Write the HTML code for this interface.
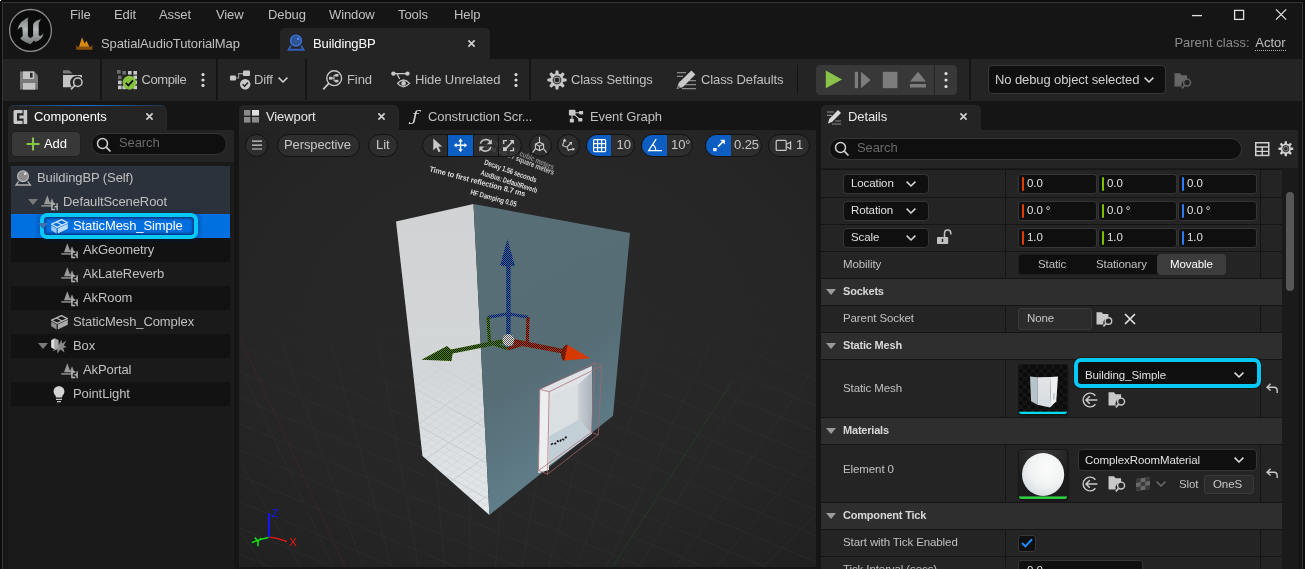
<!DOCTYPE html>
<html><head><meta charset="utf-8"><title>BuildingBP</title>
<style>
*{box-sizing:border-box;margin:0;padding:0}
html,body{width:1305px;height:569px;overflow:hidden;background:#151515}
body{font-family:"Liberation Sans",sans-serif;font-size:13px;color:#c0c0c0;position:relative;letter-spacing:-0.1px}
.a{position:absolute}
.t{position:absolute;white-space:nowrap;line-height:16px;height:16px}
svg{position:absolute;overflow:visible}
#frame{position:absolute;left:0;top:0;width:1305px;height:571px;border:2px solid #0c0c0c;border-right-width:2px;pointer-events:none}#frame:after{content:"";position:absolute;left:0;top:0;width:1299px;height:569px;border:1px solid #363636}
.menu .t{top:7px;color:#c0c0c0}
.tb{position:absolute;top:59px;height:41.7px;background:#242424}
.tbt{top:72px}
.sep{position:absolute;top:59px;width:2px;height:41px;background:#151515}
.ptab{position:absolute;top:105px;height:26px;background:#242424;border-radius:5px 5px 0 0}
.ptxt{top:109px;color:#c0c0c0}
.x{position:absolute;font-size:14px;color:#c0c0c0;font-weight:bold}
</style></head><body><div id="root" style="position:absolute;left:0;top:0;width:1305px;height:569px;will-change:transform">
<!-- TITLE -->
<div class="a" id="title" style="left:0;top:0;width:1305px;height:59px;background:#151515"></div>
<div class="menu">
<span class="t" style="left:70px">File</span><span class="t" style="left:114px">Edit</span><span class="t" style="left:159px">Asset</span><span class="t" style="left:216px">View</span><span class="t" style="left:268px">Debug</span><span class="t" style="left:329px">Window</span><span class="t" style="left:398px">Tools</span><span class="t" style="left:454px">Help</span>
</div>
<div class="a" style="left:280px;top:28px;width:210px;height:31px;background:#242424;border-radius:5px 5px 0 0"></div>
<!-- logo -->
<svg style="left:8px;top:8px" width="45" height="45" viewBox="8 8 45 45"><defs><linearGradient id="ug" x1="0" y1="0" x2="0" y2="1"><stop offset="0" stop-color="#7d8282"/><stop offset=".45" stop-color="#b4b8b8"/><stop offset="1" stop-color="#6f7474"/></linearGradient></defs>
<circle cx="30.5" cy="30.4" r="20.9" fill="#0b0b0b" stroke="#8c8c8c" stroke-width="1.3"/>
<path d="M28.6 17.4 C24.5 19 21.6 21.4 20 23.7 C18.8 25.6 18 27.6 17.4 29.8 C18.8 28 20.6 26.8 22.2 27 C22.6 29.8 22.8 33.2 22.7 35.8 C22.2 37 21.2 37.8 20.2 38.3 C21.8 40 23.4 41.2 25.2 42 C27 42.9 28.8 43.6 30.5 44.3 L34.1 40.6 L35.5 41.9 C37.6 41.2 39.4 40.2 40.7 39 C42.2 37.5 43.1 35.6 43.6 33.6 C42.6 34.8 41.4 35.7 40.1 36 C39.4 36 38.9 35.6 38.7 35 L38.7 23.8 C39.1 22 40.2 20.4 41.6 19 C39.2 19.4 36.9 20.4 35.1 21.8 C33.9 22.8 33.2 23.9 33.1 25 L33.1 36 C32.4 37 31.5 37.7 30.5 38 C29.4 37.6 28.5 37 27.9 36 L27.9 22.3 C27.6 20.4 27.8 18.8 28.6 17.4 Z" fill="url(#ug)"/></svg>
<!-- map tab icon -->
<svg style="left:76px;top:37px" width="17" height="13" viewBox="0 0 17 13"><path d="M0.2 7.2 V12.8 H16.4 V7.2 L15.2 9.8 H1.4 Z" fill="#8a5208"/><path d="M3 9.8 L6 0.2 L8.6 6.4 L10.5 3.8 L13.4 9.8 Z" fill="#d88a10"/></svg>
<!-- bp tab icon -->
<svg style="left:287px;top:34px" width="18" height="18" viewBox="287 34 18 18"><circle cx="296" cy="40.6" r="5.5" fill="#2f5496" stroke="#3b78e0" stroke-width="1.2"/><rect x="297.1" y="37.9" width="2" height="2" fill="#4d94ff"/><path d="M291 45.6 L288.6 49.8 H303.6 L301.2 45.6" fill="none" stroke="#2f5fb8" stroke-width="1.9"/></svg>
<svg style="left:468.2px;top:40.3px" width="7" height="7" viewBox="0 0 7 7"><path d="M0.4 0.4 L6.6 6.6 M6.6 0.4 L0.4 6.6" stroke="#d0d0d0" stroke-width="1.7" fill="none"/></svg>
<!-- window controls -->
<svg style="left:1190px;top:8px" width="100" height="14" viewBox="1190 8 100 14" fill="none" stroke="#e0e0e0" stroke-width="1.3"><path d="M1192 15.6 H1202"/><rect x="1234.6" y="10.4" width="9" height="9"/><path d="M1276 9.4 L1286.2 19.6 M1286.2 9.4 L1276 19.6"/></svg>

<!--TABS-->
<span class="t" style="left:101px;top:36px">SpatialAudioTutorialMap</span>
<span class="t" style="left:313px;top:36px;color:#fff">BuildingBP</span>
<span class="t" style="left:1174.4px;top:35px;color:#8a8a8a;letter-spacing:0">Parent class:</span>
<span class="t" style="left:1255.3px;top:35px;color:#c0c0c0;height:16px;letter-spacing:0">Actor</span><div class="a" style="left:1255px;top:50px;width:31px;height:0;border-top:1px dotted #b0b0b0"></div>
<!--WINCTL-->
<!-- TOOLBAR -->
<div class="tb" style="left:0;width:1305px"></div>
<div class="sep" style="left:100px"></div><div class="sep" style="left:216px"></div><div class="sep" style="left:305px"></div><div class="sep" style="left:529px"></div><div class="sep" style="left:796.5px;top:65px;height:29px;width:1.5px;background:#131313"></div><div class="sep" style="left:969px"></div>
<span class="t tbt" style="left:141.5px;letter-spacing:-0.4px">Compile</span>
<span class="t tbt" style="left:254px">Diff</span>
<span class="t tbt" style="left:347px">Find</span>
<span class="t tbt" style="left:415px">Hide Unrelated</span>
<span class="t tbt" style="left:571px">Class Settings</span>
<span class="t tbt" style="left:701px">Class Defaults</span>
<div class="a" style="left:816px;top:64.8px;width:141px;height:30.3px;background:#383838;border-radius:4.5px"></div>
<div class="a" style="left:987.5px;top:65px;width:178.5px;height:29px;background:#0f0f0f;border:1px solid #383838;border-radius:4px"></div>
<span class="t tbt" style="left:995px;color:#d0d0d0">No debug object selected</span>
<!-- save -->
<svg style="left:20px;top:70.5px" width="18" height="19" viewBox="0 0 18 19"><path d="M0 0.4 H14.4 L18 4.4 V18.6 H0 Z" fill="#7a7a7a"/><rect x="3" y="0.4" width="11.2" height="7.6" fill="#c4c4c4"/><rect x="10" y="1.8" width="2.6" height="4.8" fill="#2a2a2a"/><rect x="3" y="12" width="12.2" height="6.6" fill="#c4c4c4"/></svg>
<!-- browse -->
<svg style="left:63px;top:70px" width="20" height="20" viewBox="0 0 20 20"><path d="M0 0.2 H6 L9.6 3.6 H0 Z" fill="#7a7a7a"/><path d="M0 5 H19 V8 A6 6 0 0 0 9 17.2 H0 Z" fill="#c4c4c4"/><circle cx="14.8" cy="12.2" r="4.2" fill="none" stroke="#c4c4c4" stroke-width="1.5"/><path d="M11.8 15.4 L8 19.4" stroke="#c4c4c4" stroke-width="1.6"/></svg>
<!-- compile -->
<svg style="left:117px;top:70px" width="21" height="20" viewBox="0 0 21 20"><g fill="#6e6e6e"><rect x="0" y="0" width="3.6" height="3.6"/><rect x="5.4" y="1" width="3.6" height="3.6"/><rect x="1" y="5.6" width="3.6" height="3.6"/></g><g fill="#c8c8c8"><rect x="11" y="1" width="3.6" height="3.6"/><rect x="16.4" y="1" width="3.6" height="3.6"/><rect x="16.4" y="5.6" width="3.6" height="3.6"/><rect x="1" y="10.6" width="3.6" height="3.6"/><rect x="1" y="15.6" width="3.6" height="3.6"/><rect x="5.4" y="15.6" width="3.6" height="3.6"/><rect x="11" y="15.6" width="3.6" height="3.6"/><rect x="16.4" y="15.6" width="3.6" height="3.6"/><rect x="16.4" y="10.6" width="3.6" height="3.6"/></g><circle cx="12.4" cy="12.6" r="6.8" fill="#86c440"/><path d="M8.8 12.8 L11.4 15.4 L16 10.4" fill="none" stroke="#111" stroke-width="1.9"/></svg>
<svg style="left:201px;top:72px" width="4" height="16" viewBox="0 0 4 16" fill="#d8d8d8"><circle cx="2" cy="2.6" r="1.6"/><circle cx="2" cy="8" r="1.6"/><circle cx="2" cy="13.4" r="1.6"/></svg>
<!-- diff -->
<svg style="left:230px;top:70px" width="21" height="20" viewBox="0 0 21 20"><path d="M5 8 H8.6 V3.6 H13" fill="none" stroke="#9a9a9a" stroke-width="1.1"/><rect x="0" y="5.6" width="6" height="4.8" rx="1" fill="#c8c8c8"/><rect x="13" y="0.6" width="7" height="5.4" rx="1" fill="#c8c8c8"/><circle cx="15.2" cy="14.2" r="5.2" fill="#c8c8c8"/><path d="M12.6 14.2 L14.6 16.2 L18 12.4" fill="none" stroke="#222" stroke-width="1.5"/></svg>
<svg style="left:278px;top:76.5px;color:#d0d0d0" width="10" height="6"><use href="#chev"/></svg>
<!-- find -->
<svg style="left:322px;top:69px" width="22" height="22" viewBox="0 0 22 22"><circle cx="12.2" cy="9.2" r="7.4" fill="none" stroke="#c8c8c8" stroke-width="1.4"/><path d="M6.8 14.4 L1.2 20.4" stroke="#c8c8c8" stroke-width="1.7"/><path d="M8.6 9.2 H12 V6.4 H14 M12 9.2 V12 H14" fill="none" stroke="#c8c8c8" stroke-width="1"/><rect x="7" y="7.8" width="3.4" height="2.8" fill="#c8c8c8"/><rect x="13.2" y="5" width="3.2" height="2.6" fill="#c8c8c8"/><rect x="13.2" y="10.8" width="3.2" height="2.6" fill="#c8c8c8"/></svg>
<!-- hide unrelated -->
<svg style="left:391px;top:71px" width="20" height="18" viewBox="0 0 20 18"><path d="M2.4 2.6 H16 M6 2.6 L8.6 8" stroke="#c8c8c8" stroke-width="1.2" fill="none"/><circle cx="2.4" cy="2.6" r="2.2" fill="#c8c8c8"/><circle cx="16.4" cy="2.6" r="2.2" fill="#c8c8c8"/><path d="M6.6 12.4 Q12.4 5.6 18.6 12.4 Q12.4 19.2 6.6 12.4 Z" fill="none" stroke="#c8c8c8" stroke-width="1.3"/><circle cx="12.6" cy="12.4" r="2.3" fill="#c8c8c8"/></svg>
<svg style="left:514px;top:72px" width="4" height="16" viewBox="0 0 4 16" fill="#d8d8d8"><circle cx="2" cy="2.6" r="1.6"/><circle cx="2" cy="8" r="1.6"/><circle cx="2" cy="13.4" r="1.6"/></svg>
<!-- gear -->
<svg style="left:547px;top:69.7px" width="20" height="20" viewBox="-10 -10 20 20"><g fill="#c8c8c8"><path d="M-1.9 -5.5 L-1.3 -9.6 H1.3 L1.9 -5.5 Z" transform="rotate(0)"/><path d="M-1.9 -5.5 L-1.3 -9.6 H1.3 L1.9 -5.5 Z" transform="rotate(45)"/><path d="M-1.9 -5.5 L-1.3 -9.6 H1.3 L1.9 -5.5 Z" transform="rotate(90)"/><path d="M-1.9 -5.5 L-1.3 -9.6 H1.3 L1.9 -5.5 Z" transform="rotate(135)"/><path d="M-1.9 -5.5 L-1.3 -9.6 H1.3 L1.9 -5.5 Z" transform="rotate(180)"/><path d="M-1.9 -5.5 L-1.3 -9.6 H1.3 L1.9 -5.5 Z" transform="rotate(225)"/><path d="M-1.9 -5.5 L-1.3 -9.6 H1.3 L1.9 -5.5 Z" transform="rotate(270)"/><path d="M-1.9 -5.5 L-1.3 -9.6 H1.3 L1.9 -5.5 Z" transform="rotate(315)"/></g><circle r="6.5" fill="#c8c8c8"/><circle r="4.4" fill="#242424"/><circle r="2.9" fill="none" stroke="#9a9a9a" stroke-width="1.1"/></svg>
<!-- class defaults -->
<svg style="left:676px;top:69.5px" width="21" height="20" viewBox="0 0 21 20"><path d="M1 2.6 H10 M1 6.4 H7 M9 14.6 H20 M6 18.6 H20 M12 10.6 H20" stroke="#8a8a8a" stroke-width="1.1"/><path d="M15.4 0.6 L19.4 4.6 L7 17 L0.6 19 L2.8 12.8 Z" fill="#c8c8c8"/><path d="M0.6 19 L2 15 L4.6 17.6 Z" fill="#6a6a6a"/></svg>
<!-- play group -->
<div class="a" style="left:934px;top:65px;width:1px;height:30px;background:#242424"></div>
<svg style="left:816px;top:65px" width="141" height="30" viewBox="816 65 141 30"><path d="M825.8 70.6 L842 79.4 L825.8 88.2 Z" fill="#8bc34a"/><g fill="#7c7c7c"><rect x="854.8" y="71.8" width="3.2" height="16.4"/><path d="M861 71.8 L870.6 80 L861 88.2 Z"/><rect x="882.8" y="71.8" width="14.6" height="16.4"/><path d="M910 81.4 L918 71.8 L926 81.4 Z"/><rect x="910" y="84" width="16" height="3.5"/></g><g fill="#e0e0e0"><circle cx="946" cy="73.6" r="1.6"/><circle cx="946" cy="80" r="1.6"/><circle cx="946" cy="86.5" r="1.6"/></g></svg>
<svg style="left:1144px;top:76.5px;color:#d8d8d8" width="10" height="6"><use href="#chev"/></svg>
<svg style="left:1173.5px;top:71.5px;color:#666" width="19" height="17"><use href="#browse"/></svg>

<!-- GAP -->
<div class="a" style="left:0;top:100.7px;width:1305px;height:469px;background:#151515"></div>
<!-- COMPONENTS PANEL -->
<div id="comp">
<div class="ptab" style="left:8px;width:159px"></div>
<div class="a" style="left:8px;top:130px;width:226px;height:439px;background:#242424"></div>
<span class="t ptxt" style="left:34px;color:#fff">Components</span>
<svg width="0" height="0" style="position:absolute"><defs>
<symbol id="scn" viewBox="0 0 17 16" overflow="visible">
<path d="M6.3 0.3 L9.6 9.3 L3 9.3 Z" fill="#9a9a9a"/>
<path d="M11 3.2 L13.4 9.3 L8.6 9.3 Z" fill="#9a9a9a"/>
<path d="M0.3 10.2 H12.2 V11.6 H0.3Z" fill="#9a9a9a"/>
<path d="M14.2 9 H10.9 V14.5 H14.2 M16.1 8.2 V15.3 M13.4 11.75 H16.1" fill="none" stroke="#b8b8b8" stroke-width="1.4"/>
</symbol>
<symbol id="mesh" viewBox="0 0 17 15" overflow="visible">
<path d="M0.6 5.2 L10.6 0.7 L16.4 3.6 L6.2 8.4 Z" fill="none" stroke="currentColor" stroke-width="1.3" stroke-linejoin="round"/>
<path d="M5.4 3 L11.2 6" fill="none" stroke="currentColor" stroke-width="1.2"/>
<path d="M0.2 6.4 L5.6 9.4 V14.6 L0.2 11.2 Z" fill="currentColor" opacity=".75"/>
<path d="M6.8 9.4 L16.8 4.8 V9.8 L6.8 14.6 Z" fill="currentColor" opacity=".9"/>
</symbol>
<symbol id="tri" viewBox="0 0 10 6"><path d="M0 0 H10 L5 6 Z" fill="currentColor"/></symbol>
</defs></svg>
<!-- blue top line of focused tab -->
<div class="a" style="left:11px;top:104.5px;width:153px;height:1.5px;background:linear-gradient(90deg,rgba(20,100,200,.2),#1a6fd0 50%,rgba(20,100,200,.2))"></div>
<!-- C icon -->
<svg style="left:13px;top:109px" width="16" height="16" viewBox="0 0 16 16"><path d="M0.5 2.5 Q0.5 1 2 1 H9.5 V4.2 H4 V11.8 H9.5 V15 H2 Q0.5 15 0.5 13.5 Z" fill="#c8c8c8"/><path d="M10.6 1 H14.2 V15 H10.6 V9.6 H6.4 V6.4 H10.6 Z" fill="#c8c8c8"/></svg>
<svg style="left:145.7px;top:113.1px" width="7" height="7" viewBox="0 0 7 7"><path d="M0.4 0.4 L6.6 6.6 M6.6 0.4 L0.4 6.6" stroke="#d0d0d0" stroke-width="1.7" fill="none"/></svg>
<!-- Add button -->
<div class="a" style="left:11.5px;top:131.5px;width:68.5px;height:24.5px;background:#383838;border-radius:4px;box-shadow:0 0 0 .5px #1c1c1c"></div>
<svg style="left:26px;top:137px" width="14" height="14" viewBox="0 0 14 14"><path d="M7 0.5 V13.5 M0.5 7 H13.5" stroke="#8bc24a" stroke-width="2" fill="none"/></svg>
<span class="t" style="left:44px;top:135.5px;color:#fff">Add</span>
<!-- Search -->
<div class="a" style="left:91px;top:133px;width:136px;height:22px;background:#0f0f0f;border:1px solid #353535;border-radius:11px"></div>
<svg style="left:96px;top:137px" width="16" height="16" viewBox="0 0 16 16"><circle cx="6.5" cy="6.5" r="5" fill="none" stroke="#d0d0d0" stroke-width="1.5"/><path d="M10.2 10.2 L14.5 14.5" stroke="#d0d0d0" stroke-width="1.7"/></svg>
<span class="t" style="left:119px;top:135px;color:#6a6a6a">Search</span>
<!-- tree -->
<div class="a" style="left:8px;top:162px;width:226px;height:407px;background:#1a1a1a"></div>
<div class="a" style="left:11px;top:166px;width:219px;height:48px;background:#2b323b"></div>
<div class="a" style="left:11px;top:214px;width:219px;height:24px;background:#0070e0"></div>
<div class="a" style="left:11px;top:238px;width:219px;height:24px;background:#121212"></div>
<div class="a" style="left:11px;top:286px;width:219px;height:24px;background:#121212"></div>
<div class="a" style="left:11px;top:334px;width:219px;height:24px;background:#121212"></div>
<div class="a" style="left:11px;top:382px;width:219px;height:24px;background:#121212"></div>
<!-- highlight box -->
<div class="a" style="left:39.8px;top:212.6px;width:158.2px;height:26.4px;border:4px solid #08c8f5;border-radius:7px;box-shadow:inset 0 0 2.5px 1.5px rgba(4,40,110,.85),0 0 5px 1px rgba(0,30,90,.45)"></div>
<!-- row1 -->
<svg style="left:15px;top:170px" width="17" height="16" viewBox="0 0 17 16"><circle cx="8" cy="6.2" r="5.4" fill="#8a8a8a"/><circle cx="8" cy="6.2" r="5.4" fill="none" stroke="#b8b8b8" stroke-width="1.2"/><circle cx="10.2" cy="3.8" r="1.3" fill="#e0e0e0"/><path d="M3.6 11.4 L1 15 H15.4 L12.6 11.4" fill="none" stroke="#b0b0b0" stroke-width="1.3"/></svg>
<span class="t" style="left:37px;top:170px">BuildingBP (Self)</span>
<!-- row2 -->
<svg style="left:28px;top:199px;color:#7a7a7a" width="10" height="6"><use href="#tri"/></svg>
<svg style="left:41px;top:195px" width="17" height="16"><use href="#scn"/></svg>
<span class="t" style="left:63px;top:194px">DefaultSceneRoot</span>
<!-- row3 -->
<svg style="left:38px;top:223px;color:#3a6fb0" width="10" height="6"><use href="#tri"/></svg>
<svg style="left:51px;top:219px;color:#cfe4ff" width="17" height="15"><use href="#mesh"/></svg>
<span class="t" style="left:73px;top:218px;color:#fff">StaticMesh_Simple</span>
<!-- rows -->
<svg style="left:61px;top:243px" width="17" height="16"><use href="#scn"/></svg>
<span class="t" style="left:83px;top:242px">AkGeometry</span>
<svg style="left:61px;top:267px" width="17" height="16"><use href="#scn"/></svg>
<span class="t" style="left:83px;top:266px">AkLateReverb</span>
<svg style="left:61px;top:291px" width="17" height="16"><use href="#scn"/></svg>
<span class="t" style="left:83px;top:290px">AkRoom</span>
<svg style="left:51px;top:315px;color:#b8b8b8" width="17" height="15"><use href="#mesh"/></svg>
<span class="t" style="left:73px;top:314px">StaticMesh_Complex</span>
<svg style="left:38px;top:343px;color:#7a7a7a" width="10" height="6"><use href="#tri"/></svg>
<svg style="left:51px;top:338px" width="16" height="16" viewBox="0 0 16 16"><path d="M8 6.4 L10.4 1.6 L11 5.6 L15.4 2.6 L12.8 7.2 L15.8 9.2 L12.2 9.8 L13.6 14.6 L9.4 11.4 L6.4 15.4 L6.2 11.4 L1.4 13.2 L5 9.4 Z" fill="#8a8a8a"/><path d="M0.2 2.2 L3.8 0.2 V11.6 L0.2 9.6 Z" fill="#e0e0e0"/><path d="M3.8 0.2 L7.6 2.2 V9.6 L3.8 11.6 Z" fill="#a8a8a8"/></svg>
<span class="t" style="left:73px;top:338px">Box</span>
<svg style="left:61px;top:363px" width="17" height="16"><use href="#scn"/></svg>
<span class="t" style="left:83px;top:362px">AkPortal</span>
<svg style="left:53px;top:386px" width="12" height="17" viewBox="0 0 12 17"><path d="M6 0.3 C2.6 0.3 0.6 2.8 0.6 5.4 C0.6 7.6 2 8.8 2.8 10 V11.6 H9.2 V10 C10 8.8 11.4 7.6 11.4 5.4 C11.4 2.8 9.4 0.3 6 0.3 Z" fill="#d4d4d4"/><path d="M3 13.4 H9 M4 15.6 H8" stroke="#c4c4c4" stroke-width="1.4"/></svg>
<span class="t" style="left:73px;top:386px">PointLight</span>
<!--COMPEND-->
</div>
<!-- VIEWPORT PANEL -->
<div id="vp">
<!-- tab well -->

<div class="ptab" style="left:239px;width:160px;height:25px"></div>
<svg style="left:244px;top:110px" width="15" height="13" viewBox="0 0 15 13"><rect x="0" y="0" width="6.4" height="5.6" fill="#8a8a8a"/><rect x="8" y="0" width="7" height="5.6" fill="#e0e0e0"/><rect x="0" y="7" width="6.4" height="5.6" fill="#8a8a8a"/><rect x="8" y="7" width="7" height="5.6" fill="#8a8a8a"/></svg>
<span class="t ptxt" style="left:266px;color:#e8e8e8">Viewport</span>
<svg style="left:377.7px;top:113.1px" width="7" height="7" viewBox="0 0 7 7"><path d="M0.4 0.4 L6.6 6.6 M6.6 0.4 L0.4 6.6" stroke="#d0d0d0" stroke-width="1.7" fill="none"/></svg>
<span class="t" id="fn" style="left:411.5px;top:106.5px;font-family:'DejaVu Serif',serif;font-style:italic;font-size:14.5px;line-height:18px;height:18px;color:#d8d8d8;letter-spacing:0;transform:scaleX(1.22);transform-origin:0 0">ƒ</span>
<span class="t ptxt" style="left:428px">Construction Scr...</span>
<svg style="left:568px;top:109px" width="16" height="14" viewBox="568 109 16 14"><path d="M572 112.7 H581 M572.2 112.7 L580 119.6 M572 113 V120" stroke="#c8c8c8" stroke-width="1.1" fill="none"/><rect x="568.9" y="109.8" width="6.6" height="5.6" rx="1" fill="#c8c8c8"/><rect x="579" y="111" width="4.2" height="3.4" rx=".8" fill="#c8c8c8"/><rect x="569.8" y="118.8" width="4.2" height="3.8" rx=".8" fill="#c8c8c8"/><rect x="578.2" y="117.9" width="4.2" height="3.7" rx=".8" fill="#c8c8c8"/></svg>
<span class="t ptxt" style="left:590px">Event Graph</span>
<!-- viewport scene -->
<div class="a" style="left:239px;top:130px;width:577px;height:437px;background:#242424"></div>
<svg id="scene" style="left:240px;top:130px;overflow:hidden" width="576" height="437" viewBox="240 130 576 437">
<defs>
<radialGradient id="vg" cx="50%" cy="45%" r="80%"><stop offset="0" stop-color="#292929"/><stop offset=".6" stop-color="#262626"/><stop offset="1" stop-color="#1f1f1f"/></radialGradient>
<linearGradient id="lf" x1="0" y1="0" x2="0" y2="1"><stop offset="0" stop-color="#d0d2d3"/><stop offset=".55" stop-color="#d4d7d9"/><stop offset="1" stop-color="#e4e8eb"/></linearGradient>
<linearGradient id="rf" x1="0" y1="0" x2="0.3" y2="1"><stop offset="0" stop-color="#586f78"/><stop offset=".6" stop-color="#566d76"/><stop offset="1" stop-color="#61808c"/></linearGradient>
<linearGradient id="door" x1="0" y1="0" x2="1" y2="0"><stop offset="0" stop-color="#ccd2d6"/><stop offset="1" stop-color="#a9b4ba"/></linearGradient>
<linearGradient id="gmg" x1="0" y1="0" x2="0" y2="1"><stop offset="0" stop-color="#000"/><stop offset=".3" stop-color="#000"/><stop offset=".62" stop-color="#fff"/><stop offset="1" stop-color="#fff"/></linearGradient><mask id="gm" maskUnits="userSpaceOnUse" x="240" y="130" width="576" height="437"><rect x="240" y="130" width="576" height="437" fill="url(#gmg)"/></mask><clipPath id="lfc"><path d="M396 221.5 L473.5 204 L489.4 515 L422.5 456 Z"/></clipPath><linearGradient id="lfmg" x1="0" y1="0" x2="0" y2="1"><stop offset="0" stop-color="#000"/><stop offset=".42" stop-color="#000"/><stop offset=".7" stop-color="#fff"/><stop offset="1" stop-color="#fff"/></linearGradient><mask id="lfm" maskUnits="userSpaceOnUse" x="390" y="200" width="110" height="320"><rect x="390" y="200" width="110" height="320" fill="url(#lfmg)"/></mask><pattern id="chB" width="2" height="2" patternUnits="userSpaceOnUse" shape-rendering="crispEdges"><rect width="2" height="2" fill="#2a6ad0"/><rect width="1" height="1" fill="#0a1020"/><rect x="1" y="1" width="1" height="1" fill="#0a1020"/></pattern>
<pattern id="chG" width="2" height="2" patternUnits="userSpaceOnUse" shape-rendering="crispEdges"><rect width="2" height="2" fill="#4a8a00"/><rect width="1" height="1" fill="#0c1400"/><rect x="1" y="1" width="1" height="1" fill="#0c1400"/></pattern>
<pattern id="chR" width="2" height="2" patternUnits="userSpaceOnUse" shape-rendering="crispEdges"><rect width="2" height="2" fill="#d03000"/><rect width="1" height="1" fill="#180400"/><rect x="1" y="1" width="1" height="1" fill="#180400"/></pattern>
<pattern id="chW" width="2" height="2" patternUnits="userSpaceOnUse" shape-rendering="crispEdges"><rect width="2" height="2" fill="#e8e8e8"/><rect width="1" height="1" fill="#505050"/><rect x="1" y="1" width="1" height="1" fill="#505050"/></pattern>
</defs>
<rect x="240" y="130" width="576" height="437" fill="url(#vg)"/>
<!-- ground grid -->
<g stroke="#363636" stroke-width="1" opacity=".4" fill="none" mask="url(#gm)"><path d="M240 -70 L816 172 M240 -44 L816 198 M240 -18 L816 224 M240 8 L816 250 M240 34 L816 276 M240 60 L816 302 M240 86 L816 328 M240 112 L816 354 M240 138 L816 380 M240 164 L816 406 M240 190 L816 432 M240 216 L816 458 M240 242 L816 484 M240 268 L816 510 M240 294 L816 536 M240 320 L816 562 M240 346 L816 588 M240 372 L816 614 M240 398 L816 640 M240 424 L816 666 M240 450 L816 692 M240 476 L816 718 M240 502 L816 744 M240 528 L816 770 M240 554 L816 796 M240 580 L816 822 M240 606 L816 848 M240 632 L816 874 M240 658 L816 900 M240 684 L816 926 M240 710 L816 952 M240 736 L816 978 M240 762 L816 1004 M240 788 L816 1030 M240 814 L816 1056"/><path d="M470 860 L-309 410 M470 860 L-267 344 M470 860 L-219 281 M470 860 L-166 224 M470 860 L-109 171 M470 860 L-46 123 M470 860 L20 81 M470 860 L90 44 M470 860 L162 14 M470 860 L237 -9 M470 860 L314 -26 M470 860 L392 -37 M470 860 L470 -40 M470 860 L548 -37 M470 860 L626 -26 M470 860 L703 -9 M470 860 L778 14 M470 860 L850 44 M470 860 L920 81 M470 860 L986 123 M470 860 L1049 171 M470 860 L1106 224 M470 860 L1159 281 M470 860 L1207 344 M470 860 L1249 410"/></g>
<path d="M240 338 L346 569" stroke="#4a2626" stroke-width="1" opacity=".6"/>
<path d="M733 380 L613 566" stroke="#264026" stroke-width="1" opacity=".7"/>
<!-- 3D text -->
<g font-family="Liberation Sans, sans-serif" font-size="7.6" fill="#dcdcdc" font-weight="bold" style="filter:blur(.3px)">
<text transform="translate(480,139) rotate(23)" textLength="79" lengthAdjust="spacingAndGlyphs" fill="#8c8c8c">Volume 286.41 cubic meters</text>
<text transform="translate(483,148) rotate(21)" textLength="75" lengthAdjust="spacingAndGlyphs" fill="#c4c4c4">Area 345.77 square meters</text>
<text transform="translate(483.8,164.3) rotate(19.5)" textLength="55" lengthAdjust="spacingAndGlyphs">Decay 1.56 seconds</text>
<text transform="translate(480.3,174.8) rotate(18)" textLength="59" lengthAdjust="spacingAndGlyphs">AuxBus: DefaultReverb</text>
<text transform="translate(429,171.2) rotate(14.8)" textLength="99" lengthAdjust="spacingAndGlyphs">Time to first reflection 8.7 ms</text>
<text transform="translate(470,194.3) rotate(15.3)" textLength="47.5" lengthAdjust="spacingAndGlyphs">HF Damping 0.05</text>
</g>
<!-- building -->
<path d="M396 221.5 L473.5 204 L489.4 515 L422.5 456 Z" fill="url(#lf)"/>
<path d="M473.5 204 L630 233 L613 415.7 L489.4 515 Z" fill="url(#rf)"/>
<!-- left face faint grid -->
<g clip-path="url(#lfc)" mask="url(#lfm)" stroke="#c3c9cd" stroke-width=".6" fill="none" opacity=".6"><path d="M390 200 L495 257.8 M390 207 L495 264.8 M390 214 L495 271.8 M390 221 L495 278.8 M390 228 L495 285.8 M390 235 L495 292.8 M390 242 L495 299.8 M390 249 L495 306.8 M390 256 L495 313.8 M390 263 L495 320.8 M390 270 L495 327.8 M390 277 L495 334.8 M390 284 L495 341.8 M390 291 L495 348.8 M390 298 L495 355.8 M390 305 L495 362.8 M390 312 L495 369.8 M390 319 L495 376.8 M390 326 L495 383.8 M390 333 L495 390.8 M390 340 L495 397.8 M390 347 L495 404.8 M390 354 L495 411.8 M390 361 L495 418.8 M390 368 L495 425.8 M390 375 L495 432.8 M390 382 L495 439.8 M390 389 L495 446.8 M390 396 L495 453.8 M390 403 L495 460.8 M390 410 L495 467.8 M390 417 L495 474.8 M390 424 L495 481.8 M390 431 L495 488.8 M390 438 L495 495.8 M390 445 L495 502.8 M390 452 L495 509.8 M390 459 L495 516.8 M390 466 L495 523.8 M390 473 L495 530.8 M390 480 L495 537.8 M390 487 L495 544.8 M390 494 L495 551.8 M390 501 L495 558.8 M390 508 L495 565.8 M390 515 L495 572.8 M390 522 L495 579.8 M390 529 L495 586.8 M390 536 L495 593.8 M390 543 L495 600.8 M390 550 L495 607.8 M390 557 L495 614.8 M390 564 L495 621.8 M390 571 L495 628.8 M390 578 L495 635.8 M390 585 L495 642.8 M390 592 L495 649.8 M390 599 L495 656.8 M390 606 L495 663.8 M390 613 L495 670.8 M390 620 L495 677.8 M390 627 L495 684.8 M390 634 L495 691.8 M390 641 L495 698.8 M390 648 L495 705.8 M390 655 L495 712.8 M390 662 L495 719.8 M390 669 L495 726.8 M390 676 L495 733.8 M390 683 L495 740.8 M390 690 L495 747.8 M390 697 L495 754.8 M390 300 L495 226.5 M390 308 L495 234.5 M390 316 L495 242.5 M390 324 L495 250.5 M390 332 L495 258.5 M390 340 L495 266.5 M390 348 L495 274.5 M390 356 L495 282.5 M390 364 L495 290.5 M390 372 L495 298.5 M390 380 L495 306.5 M390 388 L495 314.5 M390 396 L495 322.5 M390 404 L495 330.5 M390 412 L495 338.5 M390 420 L495 346.5 M390 428 L495 354.5 M390 436 L495 362.5 M390 444 L495 370.5 M390 452 L495 378.5 M390 460 L495 386.5 M390 468 L495 394.5 M390 476 L495 402.5 M390 484 L495 410.5 M390 492 L495 418.5 M390 500 L495 426.5 M390 508 L495 434.5 M390 516 L495 442.5 M390 524 L495 450.5 M390 532 L495 458.5 M390 540 L495 466.5 M390 548 L495 474.5 M390 556 L495 482.5 M390 564 L495 490.5 M390 572 L495 498.5 M390 580 L495 506.5 M390 588 L495 514.5 M390 596 L495 522.5 M390 604 L495 530.5 M390 612 L495 538.5 M390 620 L495 546.5 M390 628 L495 554.5 M390 636 L495 562.5 M390 644 L495 570.5 M390 652 L495 578.5 M390 660 L495 586.5 M390 668 L495 594.5 M390 676 L495 602.5 M390 684 L495 610.5 M390 692 L495 618.5 M390 700 L495 626.5 M390 708 L495 634.5 M390 716 L495 642.5 M390 724 L495 650.5 M390 732 L495 658.5 M390 740 L495 666.5 M390 748 L495 674.5 M390 756 L495 682.5 M390 764 L495 690.5 M390 772 L495 698.5 M390 780 L495 706.5 M390 788 L495 714.5 M390 796 L495 722.5"/><path d="M390 200 L495 257.8 M390 235 L495 292.8 M390 270 L495 327.8 M390 305 L495 362.8 M390 340 L495 397.8 M390 375 L495 432.8 M390 410 L495 467.8 M390 445 L495 502.8 M390 480 L495 537.8 M390 515 L495 572.8 M390 550 L495 607.8 M390 585 L495 642.8 M390 620 L495 677.8 M390 655 L495 712.8 M390 690 L495 747.8 M390 324 L495 250.5 M390 364 L495 290.5 M390 404 L495 330.5 M390 444 L495 370.5 M390 484 L495 410.5 M390 524 L495 450.5 M390 564 L495 490.5 M390 604 L495 530.5 M390 644 L495 570.5 M390 684 L495 610.5 M390 724 L495 650.5 M390 764 L495 690.5" stroke="#b4bbc0" stroke-width=".8"/></g>
<!-- door -->
<path d="M539.8 389.3 L591.9 366 L591.9 433.6 L538.5 473 Z" fill="#dfe3e6"/>
<path d="M549.6 396 L578 384.6 L578 420 L549.6 436 Z" fill="#dadfe2"/>
<path d="M578 384.6 L591.9 372 L591.9 433.6 L578 420 Z" fill="url(#door)"/>
<path d="M549.6 436 L578 420 L591.9 433.6 L538.5 473 L539 442 Z" fill="#c3cfd7"/>
<path d="M539.8 389.3 L549.4 392 L549 470 L538.5 473 Z" fill="#eceeef"/>
<g fill="none" stroke="#a8656e" stroke-width=".85" opacity=".85"><path d="M539.8 389.3 L595 362.8 L591.4 432.4 L538.5 470.5 Z"/><path d="M549.1 391.8 L601.7 366 L598.3 434.8 L547.6 474.2 Z"/><path d="M539.8 389.3 L549.1 391.8 M595 362.8 L601.7 366 M591.4 432.4 L598.3 434.8 M538.5 470.5 L547.6 474.2"/></g>
<path d="M551 444.6 l2.4 -1.6 l1.6 .8 l2.6 -2.8 l2 1 l2.4 -3.4 l1.8 1.2 l2 -2.6 l1.6 .4" stroke="#151515" stroke-width="1.5" fill="none" stroke-dasharray="2.4 1.4"/>
<!-- gizmo -->
<g fill="none" stroke-width="3">
<path d="M488 317.2 L508.3 313.8 L528 317.2" stroke="url(#chB)"/>
<path d="M488 317.2 L489.4 342.2 L507.6 348.8" stroke="url(#chG)"/>
<path d="M528 317.2 L527.2 343 L507.6 348.8" stroke="url(#chR)"/>
</g>
<path d="M506.2 340 V266 H500 L507.4 239 L515 266 H510.6 V340 Z" fill="url(#chB)"/>
<path d="M506 338.6 L451 349.4 L447 345.9 L421.4 359.7 L451.5 361 L452.6 353.4 L507 342.8 Z" fill="url(#chG)"/>
<path d="M510 338.2 L563 349 L562.5 353.6 L509 343.4 Z" fill="url(#chR)"/>
<ellipse cx="565.6" cy="352.6" rx="4.2" ry="8" fill="url(#chR)" transform="rotate(12 565.6 352.6)"/>
<path d="M567.5 345 L590.3 358.2 L564.5 360.6 Z" fill="#d63a02"/>
<circle cx="508.3" cy="340" r="6" fill="url(#chW)"/>
<!-- axis indicator -->
<g fill="none"><path d="M269 537 V513" stroke="#1414ff" stroke-width="2"/><path d="M269.6 537.2 L278 538.6 L287 541.6" stroke="#f01414" stroke-width="1.3"/><path d="M268.4 537.4 L260 539.6 L251.8 542.6 M254.8 537.6 L258 541.2 L261.2 538 M258 541.2 V546.2" stroke="#14e614" stroke-width="1.5"/></g>
<g font-family="Liberation Sans, sans-serif" font-size="11.5"><text x="271.4" y="517.4" fill="#1414ff">Z</text><text x="289.2" y="545.8" fill="#f01414">X</text></g>
</svg>
<!-- viewport toolbar -->
<style>
.pill{position:absolute;top:133.5px;height:23px;background:#2e2e2e;border:1px solid #111;border-radius:11.5px;overflow:hidden}
.pill .b{position:absolute;left:0;top:0;bottom:0;background:#0c5ec2}
.vt{top:137px;color:#c8c8c8}
</style>
<div class="pill" style="left:245px;width:23px"></div>
<svg style="left:251.5px;top:140px" width="10" height="10"><path d="M0 1.2 H10 M0 5.1 H10 M0 9 H10" stroke="#d0d0d0" stroke-width="1.2"/></svg>
<div class="pill" style="left:276.5px;width:83px"></div><span class="t vt" style="left:284px">Perspective</span>
<div class="pill" style="left:368px;width:29.5px"></div><span class="t vt" style="left:376px">Lit</span>
<div class="pill" style="left:422px;width:100px;background:rgba(46,46,46,.85)"><div class="b" style="left:25px;width:24.5px"></div><div class="a" style="left:0;top:0;width:25px;height:23px;border-right:1px solid #151515"></div><div class="a" style="left:49.5px;top:0;width:1px;height:23px;background:#151515"></div><div class="a" style="left:74.5px;top:0;width:1px;height:23px;background:#151515"></div></div>

<div class="pill" style="left:528.5px;width:23px"></div>
<div class="pill" style="left:557px;width:23px"></div>
<div class="pill" style="left:586px;width:49px"><div class="b" style="width:24px"></div></div><span class="t vt" style="left:616.5px">10</span>
<div class="pill" style="left:641px;width:52px"><div class="b" style="width:24.5px"></div></div><span class="t vt" style="left:671px">10°</span>
<div class="pill" style="left:705px;width:57px"><div class="b" style="width:24.5px"></div></div><span class="t vt" style="left:734px">0.25</span>
<div class="pill" style="left:768px;width:41.5px"></div><span class="t vt" style="left:796px">1</span>
<svg style="left:422px;top:133px" width="390" height="24" viewBox="422 133 390 24">
<!-- select -->
<path d="M433.3 138.4 V150.4 L436.3 147.6 L438.6 152.2 L440.6 151.3 L438.4 146.8 L442.2 146.4 Z" fill="#c8c8c8"/>
<!-- move -->
<g stroke="#fff" stroke-width="1.4" fill="#fff"><path d="M460.5 140 V150.6 M455.2 145.3 H465.8" fill="none"/><path d="M460.5 138.6 L462.8 141.4 H458.2 Z M460.5 152 L462.8 149.2 H458.2 Z M453.8 145.3 L456.6 143 V147.6 Z M467.2 145.3 L464.4 143 V147.6 Z" stroke="none"/></g>
<!-- rotate -->
<g fill="none" stroke="#c8c8c8" stroke-width="1.5"><path d="M480.4 143.6 A5.6 5.6 0 0 1 490.6 142.4"/><path d="M490.8 147 A5.6 5.6 0 0 1 480.6 148.4"/></g><path d="M491.8 139.2 V144.2 H486.8 Z M479.4 151.4 V146.4 H484.4 Z" fill="#c8c8c8"/>
<!-- scale -->
<g fill="none" stroke="#c8c8c8" stroke-width="1.4"><path d="M503.6 144 V140.6 H507 M513.4 147.4 V150.6 H510"/><path d="M506 148.4 L512.6 141.6" stroke-width="1.6"/></g><rect x="503" y="147.2" width="3.8" height="3.8" fill="#c8c8c8"/><path d="M514 140 V144.6 L509.4 140 Z" fill="#c8c8c8"/>
<!-- coord cube -->
<g fill="none" stroke="#c8c8c8" stroke-width="1.1"><path d="M539.5 137 V142.2 M539.5 142.2 L543.6 144.2 V148.6 L539.5 150.6 L535.4 148.6 V144.2 Z M535.4 144.2 L539.5 146.2 L543.6 144.2 M539.5 146.2 V150.6 M535.4 148.6 L532.6 152.6 M543.6 148.6 L546.6 152.6"/></g>
<!-- surface snap -->
<g fill="none" stroke="#c8c8c8" stroke-width="1.1"><path d="M562.2 145.4 L567 147.1 L568.6 151"/><path d="M562.6 145.2 L564.4 140.6 M567 147 L570.6 143.4 M568.6 149.9 L573.4 149.2"/></g><path d="M564.9 138.6 L566.6 141.8 L562.6 141 Z M572.2 141.8 L571.6 145.2 L568.8 142.4 Z M575.2 148.9 L572.6 151 L572.2 147.4 Z" fill="#c8c8c8"/>
<!-- grid -->
<g fill="none" stroke="#fff" stroke-width="1.2"><rect x="593.6" y="139.6" width="12" height="12" rx="1"/><path d="M597.6 139.6 V151.6 M601.6 139.6 V151.6 M593.6 143.6 H605.6 M593.6 147.6 H605.6"/></g>
<!-- angle -->
<g fill="none" stroke="#fff" stroke-width="1.2"><path d="M656.2 139.2 L648.6 150.6 H662"/><path d="M652.6 144.6 A6.5 6.5 0 0 1 655.6 150.6"/></g>
<!-- scale snap -->
<rect x="713.2" y="148" width="3.4" height="3.2" fill="#fff"/><path d="M718 146.6 L723.4 141.2" stroke="#fff" stroke-width="1.5" fill="none"/><path d="M724.8 139.8 V144.6 L720 139.8 Z" fill="#fff"/>
<!-- camera -->
<g fill="none" stroke="#c8c8c8" stroke-width="1.2"><rect x="776.2" y="140.4" width="10" height="10" rx="1"/><path d="M786.4 144.6 L790.6 142 V149 L786.4 146.4"/></g>
</svg>
<!--VPEND-->
</div>
<!-- DETAILS PANEL -->
<div id="det">
<svg width="0" height="0" style="position:absolute"><defs>
<symbol id="chev" viewBox="0 0 10 6" overflow="visible"><path d="M0.6 0.6 L5 5 L9.4 0.6" fill="none" stroke="currentColor" stroke-width="1.5"/></symbol>
<symbol id="browse" viewBox="0 0 18 16" overflow="visible"><path d="M0.5 1.2 H5.6 L7.2 3 H12.4 V7 A5 5 0 0 0 7.4 13.6 H0.5 Z" fill="currentColor"/><circle cx="12.4" cy="10" r="3.3" fill="none" stroke="currentColor" stroke-width="1.4"/><path d="M10 12.6 L7.4 15.4" stroke="currentColor" stroke-width="1.6"/></symbol>
<symbol id="usesel" viewBox="0 0 16 16" overflow="visible"><path d="M13.44 3.75 A6.9 6.9 0 1 0 13.44 12.25" fill="none" stroke="currentColor" stroke-width="1.4"/><path d="M15.4 8 H4.2 M7.8 4.2 L4 8 L7.8 11.8" fill="none" stroke="currentColor" stroke-width="1.6"/></symbol>
<symbol id="reset" viewBox="0 0 12 11" overflow="visible"><path d="M4.6 0.8 L1 4.2 L4.6 7.6 M1 4.2 H8 Q11.2 4.2 11.2 7.4 V10" fill="none" stroke="currentColor" stroke-width="1.4"/></symbol>
</defs></svg>
<style>
#det{font-size:11.5px;letter-spacing:-0.1px}
#det .t{line-height:14px;height:14px;margin-top:-0.6px}
.row{position:absolute;left:821px;width:461px;background:#242424;border-top:1px solid #151515}
.hrow{position:absolute;left:821px;width:461px;background:#2e2e2e;border-top:1px solid #151515}
.lbl{color:#c0c0c0;left:843px}
.hl{color:#d8d8d8;left:843px;font-weight:bold;font-size:11px;letter-spacing:-0.2px}
.vb{position:absolute;height:20px;background:#0f0f0f;border:1px solid #353535;border-radius:3px}
.vb i{position:absolute;left:2.5px;top:2px;width:2px;height:14px;border-radius:1px}
.vtx{color:#e0e0e0}
.dd{position:absolute;background:#0f0f0f;border:1px solid #353535;border-radius:4px}
</style>

<div class="ptab" style="left:821px;width:160px;height:25px"></div>
<div class="a" style="left:821px;top:130px;width:477px;height:439px;background:#242424"></div>
<svg style="left:826px;top:109px" width="17" height="16" viewBox="0 0 17 16"><path d="M1 3 H8 M1 6.4 H6 M6 15 H15 M9 12 H15" stroke="#8a8a8a" stroke-width="1.2"/><path d="M12 1 L15 4 L6 13 L2 14.4 L3.2 10 Z" fill="#d8d8d8"/></svg>
<span class="t" style="left:848px;top:109.5px;font-size:13px;line-height:16px;height:16px;color:#e8e8e8;letter-spacing:-0.1px">Details</span>
<svg style="left:959.7px;top:113.1px" width="7" height="7" viewBox="0 0 7 7"><path d="M0.4 0.4 L6.6 6.6 M6.6 0.4 L0.4 6.6" stroke="#d0d0d0" stroke-width="1.7" fill="none"/></svg>
<!-- search -->
<div class="a" style="left:829px;top:138px;width:413px;height:22px;background:#0f0f0f;border:1px solid #353535;border-radius:11px"></div>
<svg style="left:834px;top:141px" width="16" height="16" viewBox="0 0 16 16"><circle cx="6.5" cy="6.5" r="5" fill="none" stroke="#d0d0d0" stroke-width="1.5"/><path d="M10.2 10.2 L14.5 14.5" stroke="#d0d0d0" stroke-width="1.7"/></svg>
<span class="t" style="left:857px;top:140.7px;font-size:13px;line-height:16px;height:16px;color:#6a6a6a">Search</span>
<svg style="left:1254.8px;top:141.9px" width="14.5" height="14.2" viewBox="0 0 14.5 14.2"><rect x=".75" y=".75" width="13" height="12.7" fill="none" stroke="#d0d0d0" stroke-width="1.5"/><path d="M.75 5 H13.75 M.75 9.4 H13.75 M7.25 5 V13.4" stroke="#d0d0d0" stroke-width="1.4"/></svg>
<svg style="left:1278.4px;top:141.1px" width="15.6" height="15.6" viewBox="-10 -10 20 20"><g fill="#d0d0d0"><path d="M-1.9 -5.5 L-1.3 -9.6 H1.3 L1.9 -5.5 Z" transform="rotate(0)"/><path d="M-1.9 -5.5 L-1.3 -9.6 H1.3 L1.9 -5.5 Z" transform="rotate(45)"/><path d="M-1.9 -5.5 L-1.3 -9.6 H1.3 L1.9 -5.5 Z" transform="rotate(90)"/><path d="M-1.9 -5.5 L-1.3 -9.6 H1.3 L1.9 -5.5 Z" transform="rotate(135)"/><path d="M-1.9 -5.5 L-1.3 -9.6 H1.3 L1.9 -5.5 Z" transform="rotate(180)"/><path d="M-1.9 -5.5 L-1.3 -9.6 H1.3 L1.9 -5.5 Z" transform="rotate(225)"/><path d="M-1.9 -5.5 L-1.3 -9.6 H1.3 L1.9 -5.5 Z" transform="rotate(270)"/><path d="M-1.9 -5.5 L-1.3 -9.6 H1.3 L1.9 -5.5 Z" transform="rotate(315)"/></g><circle r="6.5" fill="#d0d0d0"/><circle r="4.4" fill="#242424"/><circle r="2.9" fill="none" stroke="#a0a0a0" stroke-width="1.1"/></svg>
<!-- rows -->
<div class="a" style="left:821px;top:168px;width:477px;height:401px;background:#1a1a1a"></div>
<div class="row" style="top:169px;height:28px"></div>
<div class="row" style="top:197px;height:27px"></div>
<div class="row" style="top:224px;height:27px"></div>
<div class="row" style="top:251px;height:27px"></div>
<div class="hrow" style="top:278px;height:27px"></div>
<div class="row" style="top:305px;height:27px"></div>
<div class="hrow" style="top:332px;height:27px"></div>
<div class="row" style="top:359px;height:58px"></div>
<div class="hrow" style="top:417px;height:27px"></div>
<div class="row" style="top:444px;height:58px"></div>
<div class="hrow" style="top:502px;height:27px"></div>
<div class="row" style="top:529px;height:27px"></div>
<div class="row" style="top:556px;height:13px"></div>
<!-- column dividers -->
<div class="a" style="left:1005px;top:170px;width:1px;height:108px;background:#151515"></div>
<div class="a" style="left:1005px;top:306px;width:1px;height:26px;background:#151515"></div>
<div class="a" style="left:1005px;top:360px;width:1px;height:57px;background:#151515"></div>
<div class="a" style="left:1005px;top:445px;width:1px;height:57px;background:#151515"></div>
<div class="a" style="left:1005px;top:530px;width:1px;height:39px;background:#151515"></div>
<div class="a" style="left:1260px;top:170px;width:1px;height:108px;background:#151515"></div>
<div class="a" style="left:1260px;top:306px;width:1px;height:26px;background:#151515"></div>
<div class="a" style="left:1260px;top:360px;width:1px;height:57px;background:#151515"></div>
<div class="a" style="left:1260px;top:445px;width:1px;height:57px;background:#151515"></div>
<div class="a" style="left:1260px;top:530px;width:1px;height:39px;background:#151515"></div>
<!-- scrollbar -->
<div class="a" style="left:1286px;top:192px;width:8px;height:99px;background:#575757;border-radius:4px"></div>
<!-- transform rows -->
<div class="dd" style="left:843px;top:174px;width:86px;height:20px"></div><span class="t vtx" style="left:851px;top:177px">Location</span><svg style="left:906px;top:181px;color:#d8d8d8" width="10" height="6"><use href="#chev"/></svg>
<div class="dd" style="left:843px;top:201px;width:86px;height:20px"></div><span class="t vtx" style="left:851px;top:204px">Rotation</span><svg style="left:906px;top:208px;color:#d8d8d8" width="10" height="6"><use href="#chev"/></svg>
<div class="dd" style="left:843px;top:228px;width:86px;height:20px"></div><span class="t vtx" style="left:851px;top:231px">Scale</span><svg style="left:906px;top:235px;color:#d8d8d8" width="10" height="6"><use href="#chev"/></svg>
<svg style="left:937px;top:229px" width="15" height="16" viewBox="0 0 15 16"><path d="M7.5 8 V4.2 A3.15 3.15 0 0 1 13.8 4.2 V5.6" fill="none" stroke="#c0c0c0" stroke-width="1.5"/><rect x="0" y="8" width="11.2" height="7" rx=".8" fill="#c0c0c0"/><rect x="4.8" y="9.7" width="1.4" height="3.3" fill="#242424"/></svg>
<!-- values -->
<div class="vb" style="left:1018px;top:174px;width:79px"><i style="background:#e03c00"></i></div><span class="t vtx" style="left:1027px;top:177px">0.0</span>
<div class="vb" style="left:1098px;top:174px;width:79px"><i style="background:#7ac000"></i></div><span class="t vtx" style="left:1107px;top:177px">0.0</span>
<div class="vb" style="left:1178px;top:174px;width:79px"><i style="background:#2a7cf0"></i></div><span class="t vtx" style="left:1187px;top:177px">0.0</span>
<div class="vb" style="left:1018px;top:201px;width:79px"><i style="background:#e03c00"></i></div><span class="t vtx" style="left:1027px;top:204px">0.0 °</span>
<div class="vb" style="left:1098px;top:201px;width:79px"><i style="background:#7ac000"></i></div><span class="t vtx" style="left:1107px;top:204px">0.0 °</span>
<div class="vb" style="left:1178px;top:201px;width:79px"><i style="background:#2a7cf0"></i></div><span class="t vtx" style="left:1187px;top:204px">0.0 °</span>
<div class="vb" style="left:1018px;top:228px;width:79px"><i style="background:#e03c00"></i></div><span class="t vtx" style="left:1027px;top:231px">1.0</span>
<div class="vb" style="left:1098px;top:228px;width:79px"><i style="background:#7ac000"></i></div><span class="t vtx" style="left:1107px;top:231px">1.0</span>
<div class="vb" style="left:1178px;top:228px;width:79px"><i style="background:#2a7cf0"></i></div><span class="t vtx" style="left:1187px;top:231px">1.0</span>
<!-- mobility -->
<span class="t lbl" style="top:258px">Mobility</span>
<div class="a" style="left:1017.5px;top:254px;width:208px;height:21px;background:#0f0f0f;border-radius:4px;border:1px solid #1c1c1c"></div>
<div class="a" style="left:1157px;top:254px;width:68.5px;height:21px;background:#3c3c3c;border-radius:4px"></div>
<span class="t" style="left:1038px;top:258px;color:#c0c0c0">Static</span><span class="t" style="left:1096px;top:258px;color:#c0c0c0">Stationary</span><span class="t" style="left:1170px;top:258px;color:#fff">Movable</span>
<!-- sockets -->
<svg style="left:826px;top:289px;color:#9a9a9a" width="10" height="6"><use href="#tri"/></svg><span class="t hl" style="top:285px">Sockets</span>
<span class="t lbl" style="top:312px">Parent Socket</span>
<div class="a" style="left:1017.5px;top:307.5px;width:74px;height:22.5px;background:#2c2c2c;border:1px solid #3a3a3a;border-radius:3px"></div><span class="t" style="left:1027px;top:311.5px;color:#c8c8c8">None</span>
<svg style="left:1096px;top:311px;color:#c8c8c8" width="18" height="16"><use href="#browse"/></svg>
<svg style="left:1124px;top:313px" width="12" height="12" viewBox="0 0 12 12"><path d="M1 1 L11 11 M11 1 L1 11" stroke="#e0e0e0" stroke-width="1.7"/></svg>
<!-- static mesh -->
<svg style="left:826px;top:343px;color:#9a9a9a" width="10" height="6"><use href="#tri"/></svg><span class="t hl" style="top:339px">Static Mesh</span>
<span class="t lbl" style="top:382px">Static Mesh</span>
<div class="a" style="left:1019px;top:364.5px;width:48px;height:49px;background:#0b0b0b;border-radius:2.5px;overflow:hidden;box-shadow:0 0 0 1px #171717,1px 2px 3px rgba(0,0,0,.5)"><svg style="left:0;top:0" width="48" height="49" viewBox="1019 364.5 48 49"><defs><pattern id="ck" width="8" height="8" patternUnits="userSpaceOnUse" x="1019" y="364.5"><rect width="8" height="8" fill="#0b0b0b"/><rect width="4" height="4" fill="#151515"/><rect x="4" y="4" width="4" height="4" fill="#151515"/></pattern><linearGradient id="tl" x1="0" y1="0" x2="0" y2="1"><stop offset="0" stop-color="#e2e5e7"/><stop offset="1" stop-color="#d6dcdf"/></linearGradient></defs><rect x="1019" y="364.5" width="48" height="49" fill="url(#ck)"/><path d="M1030 376.1 L1037.4 376.7 L1037.4 404.2 L1031.1 400.7 Z" fill="#b7c4cb"/><path d="M1037.4 376.7 L1051 376.4 L1050 407 L1037.4 404.2 Z" fill="url(#tl)"/><path d="M1051 376.4 L1058 376.1 L1056.3 400.7 L1050 407 Z" fill="#eef0f1"/><path d="M1053.2 393 L1054.6 392.4 L1054.4 398.6 L1053.1 399.4 Z" fill="#b4c0c7"/><rect x="1019" y="411.2" width="48" height="2.3" fill="#00dcec"/></svg></div>
<div class="a" style="left:1073.7px;top:358px;width:187.5px;height:29.6px;border:4px solid #08c8f5;border-radius:7px;background:#0f0f0f;box-shadow:0 0 0 1px rgba(0,0,0,.35)"></div>
<span class="t vtx" style="left:1085px;top:369px">Building_Simple</span><svg style="left:1234px;top:372px;color:#e0e0e0" width="10" height="6"><use href="#chev"/></svg>
<svg style="left:1082px;top:392px;color:#c8c8c8" width="16" height="16"><use href="#usesel"/></svg>
<svg style="left:1107.5px;top:390.5px;color:#c8c8c8" width="19" height="17"><use href="#browse"/></svg>
<svg style="left:1266px;top:383px;color:#c8c8c8" width="12" height="11"><use href="#reset"/></svg>
<!-- materials -->
<svg style="left:826px;top:428px;color:#9a9a9a" width="10" height="6"><use href="#tri"/></svg><span class="t hl" style="top:424px">Materials</span>
<span class="t lbl" style="top:463px">Element 0</span>
<div class="a" style="left:1019px;top:449.5px;width:48px;height:49px;background:#1c1c1c;border-radius:2.5px;overflow:hidden;box-shadow:0 0 0 1px #171717,1px 2px 3px rgba(0,0,0,.5)"><svg style="left:0;top:0" width="48" height="49" viewBox="1019 449.5 48 49"><defs><radialGradient id="sph" cx="60%" cy="35%" r="75%"><stop offset="0" stop-color="#fbfbfb"/><stop offset=".55" stop-color="#f1f3f3"/><stop offset=".85" stop-color="#dbe2e5"/><stop offset="1" stop-color="#c3ced3"/></radialGradient><radialGradient id="thg" cx="50%" cy="0%" r="70%"><stop offset="0" stop-color="#3a3a3a"/><stop offset="1" stop-color="#1c1c1c"/></radialGradient></defs><rect x="1019" y="449.5" width="48" height="49" fill="url(#thg)"/><ellipse cx="1043.1" cy="474" rx="21.1" ry="21.4" fill="url(#sph)"/><rect x="1019" y="495.9" width="48" height="2.6" fill="#2fcc42"/></svg></div>
<div class="dd" style="left:1077.5px;top:449px;width:179px;height:21.5px"></div>
<span class="t vtx" style="left:1085px;top:454px">ComplexRoomMaterial</span><svg style="left:1234px;top:457px;color:#e0e0e0" width="10" height="6"><use href="#chev"/></svg>
<svg style="left:1082px;top:476px;color:#c8c8c8" width="16" height="16"><use href="#usesel"/></svg>
<svg style="left:1107.5px;top:474.5px;color:#c8c8c8" width="19" height="17"><use href="#browse"/></svg>
<svg style="left:1136px;top:477px" width="14" height="14" viewBox="0 0 14 14"><path d="M0 2 L14 0 V12 L0 14Z" fill="#6a6a6a"/><path d="M0 2 L4.7 1.3 V5.3 L0 6 Z M9.3 .7 L14 0 V4 L9.3 4.7Z M4.7 5.3 L9.3 4.7 V8.7 L4.7 9.3Z M0 10 L4.7 9.3 V13.3 L0 14Z M9.3 8.7 L14 8 V12 L9.3 12.7Z" fill="#3a3a3a"/></svg>
<svg style="left:1156px;top:481px;color:#6a6a6a" width="10" height="6"><use href="#chev"/></svg>
<span class="t" style="left:1179px;top:478px;color:#c0c0c0">Slot</span>
<div class="a" style="left:1204px;top:474.5px;width:50px;height:19.5px;background:#2c2c2c;border:1px solid #3a3a3a;border-radius:3px"></div><span class="t" style="left:1213px;top:478px;color:#c8c8c8">OneS</span>
<svg style="left:1266px;top:468px;color:#c8c8c8" width="12" height="11"><use href="#reset"/></svg>
<!-- component tick -->
<svg style="left:826px;top:513px;color:#9a9a9a" width="10" height="6"><use href="#tri"/></svg><span class="t hl" style="top:509px">Component Tick</span>
<span class="t lbl" style="top:536px">Start with Tick Enabled</span>
<div class="a" style="left:1018px;top:534.5px;width:18px;height:17.5px;background:#0f0f0f;border:1px solid #383838;border-radius:3px"></div>
<svg style="left:1021px;top:538px" width="12" height="10" viewBox="0 0 12 10"><path d="M1 5 L4.4 8.4 L11 1.2" fill="none" stroke="#1a8cff" stroke-width="2"/></svg>
<span class="t lbl" style="top:563px">Tick Interval (secs)</span>
<div class="vb" style="left:1017.5px;top:560px;width:125px"></div><span class="t vtx" style="left:1027px;top:563.5px">0.0</span>
<!--DETEND-->
</div>
<div id="frame"></div><div class="a" style="left:0;top:0;width:1px;height:1px;background:#fff"></div>
</div></body></html>
